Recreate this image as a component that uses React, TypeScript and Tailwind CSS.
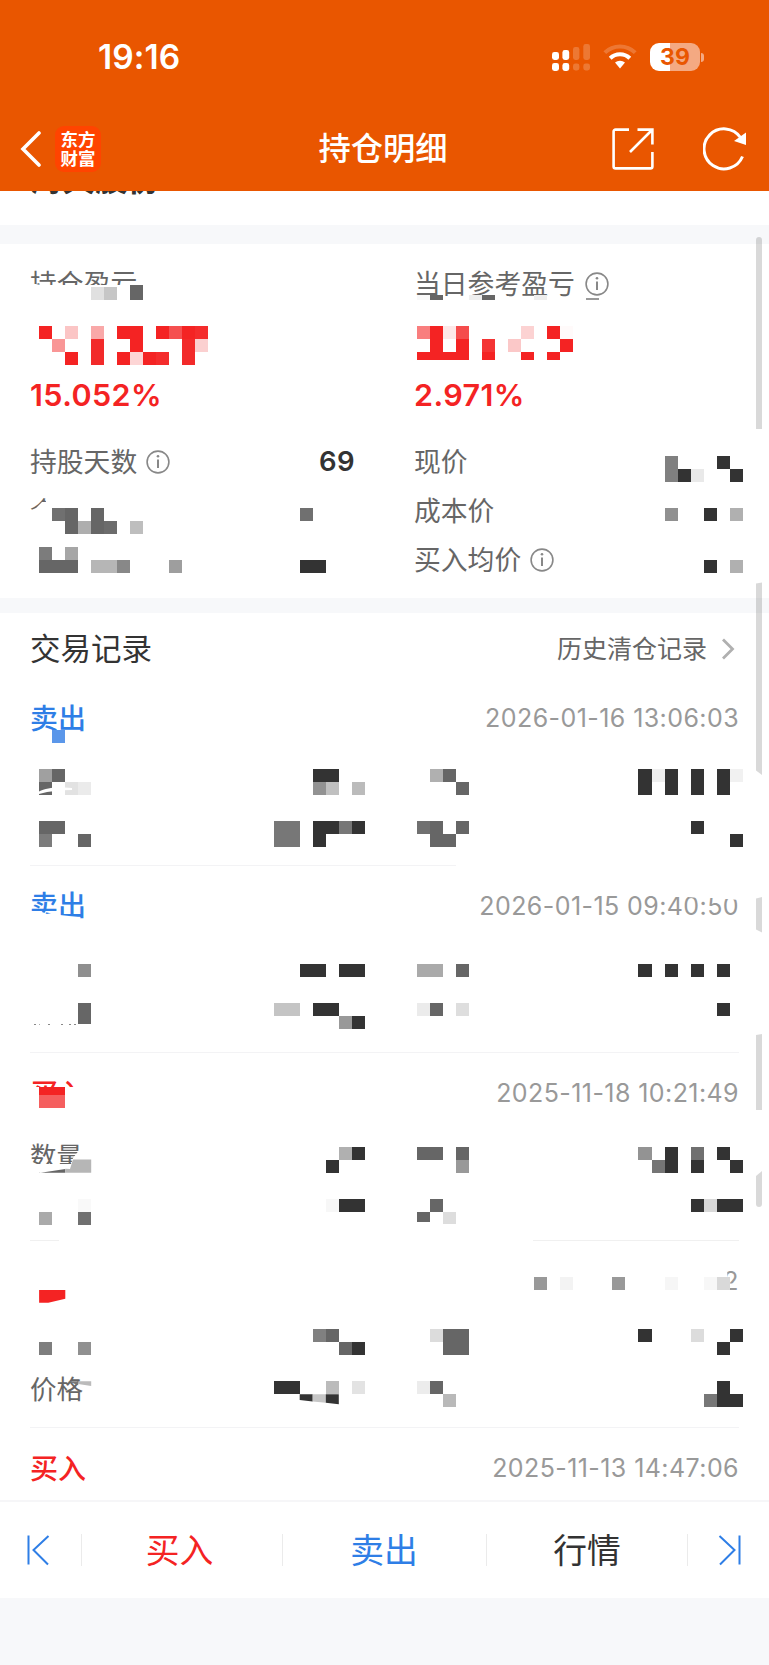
import type { ReactNode } from "react";

const CELL = 13.03;

const RED = "#f42323";
const MID = "#666666";
const DARK = "#333333";

// [column, row, width, height, color], measured in mosaic cells
type Block = [number, number, number, number, string];

const blocks: Block[] = [
  // profit summary
  [7, 22, 1, 1, "#e0e0e0"],
  [8, 22, 1, 1, "#c6c6c6"],
  [10, 21.87, 1, 1.13, MID],
  [3, 25, 1, 1, RED],
  [5, 25, 1, 1, "#fbc5c5"],
  [7, 25, 1, 1, "#f9a8a8"],
  [9, 25, 2, 1, RED],
  [12, 25, 1, 1, RED],
  [13, 25, 1, 1, "#f55050"],
  [14, 25, 1, 1, RED],
  [15, 25, 1, 1, "#f42c2c"],
  [4, 26, 1, 1, "#f99696"],
  [7, 26, 1, 2, "#f22a2a"],
  [10, 26, 1, 1, RED],
  [14, 26, 1, 2, "#f22a2a"],
  [15, 26, 1, 1, "#fbd0d0"],
  [5, 27, 1, 1, RED],
  [9, 27, 1, 1, RED],
  [10, 27, 1, 1, "#fdd5d5"],
  [11, 27, 1, 1, RED],
  [12, 27, 1, 1, "#f42c2c"],
  [32, 22.64, 1, 0.38, "#f8f8f8"],
  [33, 22.64, 1, 0.38, MID],
  [36, 22.64, 1, 0.38, "#efefef"],
  [37, 22.64, 1, 0.38, MID],
  [41, 22.64, 1, 0.38, "#eeeeee"],
  [45, 22.87, 1, 0.14, "#999999"],
  [32, 25, 1, 1, "#f97e7e"],
  [33, 25, 1, 2, RED],
  [34, 25, 1, 1, "#fde8e8"],
  [35, 25, 1, 1, "#f54c4c"],
  [40, 25, 1, 1, "#fcd2d2"],
  [42, 25, 1, 1, RED],
  [43, 25, 1, 1, "#fffafa"],
  [35, 26, 1, 1, RED],
  [37, 26, 1, 1, "#f43434"],
  [39, 26, 1, 1, "#fbc8c8"],
  [43, 26, 1, 1, RED],
  [32, 27, 4, 0.62, RED],
  [37, 27, 1, 0.62, RED],
  [40, 27, 1, 0.62, RED],
  [42, 27, 1, 0.62, RED],
  // position details
  [51, 35, 1, 2, "#808080"],
  [55, 35, 1, 1, DARK],
  [52, 36, 1, 1, DARK],
  [53, 36, 1, 1, "#e9e9e9"],
  [56, 36, 1, 1, DARK],
  [4, 39, 1, 1, "#707070"],
  [5, 39, 1, 2, MID],
  [7, 39, 1, 2, MID],
  [23, 39, 1, 1, "#707070"],
  [6, 40, 1, 1, "#aeaeae"],
  [8, 40, 1, 1, "#6c6c6c"],
  [10, 40, 1, 1, "#bebebe"],
  [51, 39, 1, 1, "#909090"],
  [54, 39, 1, 1, DARK],
  [56, 39, 1, 1, "#b0b0b0"],
  [3, 42, 1, 1, "#7c7c7c"],
  [5, 42, 1, 1, "#a6a6a6"],
  [3, 43, 3, 1, MID],
  [7, 43, 2, 1, "#b6b6b6"],
  [9, 43, 1, 1, "#888888"],
  [13, 43, 1, 1, "#9e9e9e"],
  [23, 43, 2, 1, DARK],
  [54, 43, 1, 1, DARK],
  [56, 43, 1, 1, "#b0b0b0"],
  // record 1
  [4, 56, 1, 1, "#5b97ea"],
  [3, 59, 1, 1, "#a0a0a0"],
  [4, 59, 1, 1, MID],
  [24, 59, 2, 1, DARK],
  [3, 60, 1, 1, MID],
  [5, 60, 1, 1, "#e2e2e2"],
  [6, 60, 1, 1, "#ebebeb"],
  [24, 60, 1, 1, "#929292"],
  [25, 60, 1, 1, "#c0c0c0"],
  [27, 60, 1, 1, "#bbbbbb"],
  [33, 59, 1, 1, "#b0b0b0"],
  [34, 59, 1, 1, MID],
  [35, 60, 1, 1, MID],
  [49, 59, 1, 2, DARK],
  [50, 59, 1, 1, "#efefef"],
  [51, 59, 1, 2, DARK],
  [53, 59, 1, 2, DARK],
  [55, 59, 1, 2, DARK],
  [56, 59, 1, 1, "#f1f1f1"],
  [3, 63, 2, 1, MID],
  [21, 63, 2, 2, "#777777"],
  [24, 63, 2, 1, DARK],
  [26, 63, 1, 1, "#777777"],
  [27, 63, 1, 1, DARK],
  [3, 64, 1, 1, "#7c7c7c"],
  [6, 64, 1, 1, MID],
  [24, 64, 1, 1, DARK],
  [32, 63, 1, 1, "#707070"],
  [33, 63, 1, 2, MID],
  [34, 64, 1, 1, MID],
  [35, 63, 1, 1, MID],
  [53, 63, 1, 1, DARK],
  [56, 64, 1, 1, DARK],
  // record 2
  [6, 74, 1, 1, "#8f8f8f"],
  [23, 74, 2, 1, DARK],
  [26, 74, 2, 1, DARK],
  [32, 74, 2, 1, "#aaaaaa"],
  [35, 74, 1, 1, MID],
  [49, 74, 1, 1, DARK],
  [51, 74, 1, 1, DARK],
  [53, 74, 1, 1, DARK],
  [55, 74, 1, 1, DARK],
  [6, 77, 1, 1.6, MID],
  [21, 77, 2, 1, "#c4c4c4"],
  [24, 77, 2, 1, DARK],
  [26, 78, 1, 1, "#999999"],
  [27, 78, 1, 1, DARK],
  [32, 77, 1, 1, "#ebebeb"],
  [33, 77, 1, 1, MID],
  [35, 77, 1, 1, "#dedede"],
  [55, 77, 1, 1, DARK],
  [2.6, 78.58, 0.16, 0.08, "#888888"],
  [3, 78.58, 0.1, 0.08, "#aaaaaa"],
  [3.7, 78.58, 0.16, 0.08, "#888888"],
  [4.7, 78.58, 0.16, 0.08, "#888888"],
  [5.3, 78.58, 0.12, 0.08, "#888888"],
  [5.7, 78.58, 0.12, 0.08, "#888888"],
  // record 3
  [3, 83.45, 2, 0.6, RED],
  [3, 84, 2, 1, "#f55f5f"],
  [26, 88, 1, 1, "#b0b0b0"],
  [27, 88, 1, 1, DARK],
  [25, 89, 1, 1, DARK],
  [32, 88, 2, 1, MID],
  [35, 88, 1, 1, MID],
  [35, 89, 1, 1, "#999999"],
  [49, 88, 1, 1, "#939393"],
  [50, 89, 1, 1, "#757575"],
  [51, 88, 1, 2, DARK],
  [53, 88, 1, 1, "#707070"],
  [53, 89, 1, 1, DARK],
  [55, 88, 1, 1, DARK],
  [56, 89, 1, 1, DARK],
  [6, 92, 1, 1, "#f9f9f9"],
  [3, 93, 1, 1, "#aaaaaa"],
  [6, 93, 1, 1, "#707070"],
  [25, 92, 1, 1, "#f7f7f7"],
  [26, 92, 2, 1, DARK],
  [33, 92, 1, 1, MID],
  [32, 93, 1, 0.8, MID],
  [34, 93, 1, 0.9, "#dddddd"],
  [53, 92, 1, 1, DARK],
  [54, 92, 1, 1, "#d8d8d8"],
  [55, 92, 2, 1, DARK],
  // record 4
  [41, 98, 1, 1, "#999999"],
  [43, 98, 1, 1, "#f3f3f3"],
  [47, 98, 1, 1, "#999999"],
  [51, 98, 1, 1, "#f6f6f6"],
  [54, 98, 1, 1, "#f7f7f7"],
  [55, 98, 1, 1, "#d9d9d9"],
  [24, 102, 1, 1, "#808080"],
  [25, 102, 1, 1, MID],
  [3, 103, 1, 1, "#7e7e7e"],
  [6, 103, 1, 1, "#909090"],
  [26, 103, 1, 1, MID],
  [27, 103, 1, 1, DARK],
  [33, 102, 1, 1, "#dcdcdc"],
  [34, 102, 2, 2, MID],
  [49, 102, 1, 1, DARK],
  [53, 102, 1, 1, "#dcdcdc"],
  [56, 102, 1, 1, DARK],
  [55, 103, 1, 1, DARK],
  [21, 106, 2, 1, DARK],
  [25, 106, 1, 1, "#bbbbbb"],
  [27, 106, 1, 1, "#e3e3e3"],
  [32, 106, 1, 1, "#ececec"],
  [33, 106, 1, 1, MID],
  [34, 107, 1, 1, "#b9b9b9"],
  [55, 106, 1, 1, DARK],
  [54, 107, 1, 1, "#777777"],
  [55, 107, 2, 1, DARK],
];

// Brush strokes that wipe out parts of the labels
const wipes = [
  "29,284 36,284 40,285 142,285 142,304 29,304",
  "46,487 60,487 60,528 29,528 29,511 36,508 42,502 46,502",
  "29,912 42,912 47,914 56,912 60,915 78,917 78,920 90,930 29,930",
  "674,892 740,892 740,900 726,899 712,898 700,898 688,897 674,897",
  "30,1087 90,1087 90,1112 30,1112",
  "29,1164 71,1164 73,1158 80,1149 90,1149 90,1180 29,1180",
  "704,1267 727,1267 728,1290 704,1290",
  "726,1283.5 740,1283.5 740,1286.5 726,1286.5",
];

// Leftover pieces that are not whole cells
const shards = [
  { points: "39.1,1173 65.3,1169 65.3,1172.7 39.1,1172.7", fill: MID },
  { points: "65.3,1168.8 70,1169 73,1159.5 91.2,1159.5 91.2,1172.7 65.3,1172.7", fill: "#b6b6b6" },
  { points: "39.1,1290 65.3,1290 65.3,1298.7 48.3,1302.8 39.1,1302.8", fill: RED },
  { points: "68,1381.2 78.2,1381.2 78.2,1385.3", fill: "#777777" },
  { points: "78.2,1381.2 91.2,1381.2 91.2,1386 78.2,1384", fill: "#bbbbbb" },
  { points: "299.7,1394.2 312.7,1394.2 312.7,1401.5 299.7,1400", fill: DARK },
  { points: "312.7,1394.2 325.8,1394.2 325.8,1402.7 312.7,1401.5", fill: "#c6c6c6" },
  { points: "325.8,1394.2 338.8,1394.2 338.8,1404.3 325.8,1402.7", fill: DARK },
];

const scrollbar = [
  "M756 429V240a3 3 0 0 1 6 0V429Z",
  "M756 583.5L762 582.5V775L756 770.5Z",
  "M756 898.5L762 897V932.5L756 929.5Z",
  "M756 1035L762 1034V1110H756Z",
  "M756 1176L762 1171V1204a3 3 0 0 1-6 0Z",
];

function Mosaic() {
  return (
    <svg className="pointer-events-none absolute left-0 top-0" width="769" height="1665" viewBox="0 0 769 1665">
      {wipes.map((points) => (
        <polygon key={points} points={points} fill="#fff" />
      ))}
      <g shapeRendering="crispEdges">
        {blocks.map(([x, y, w, h, fill], index) => (
          <rect key={index} x={x * CELL} y={y * CELL} width={w * CELL} height={h * CELL} fill={fill} />
        ))}
      </g>
      {shards.map((shard) => (
        <polygon key={shard.points} points={shard.points} fill={shard.fill} />
      ))}
      <path d="M38 792C45 788 52 788 58 787L72 788V790C60 790 50 791 39 794Z" fill="#fff" />
      {scrollbar.map((d) => (
        <path key={d} d={d} fill="#000" fillOpacity="0.15" />
      ))}
    </svg>
  );
}

function InfoIcon() {
  return (
    <svg width="24" height="24" viewBox="0 0 24 24" fill="none" stroke="#888" className="shrink-0">
      <circle cx="12" cy="12" r="10.9" strokeWidth="1.6" />
      <path d="M12 9.6V18" strokeWidth="2" />
      <circle cx="12" cy="6.3" r="1.3" fill="#888" stroke="none" />
    </svg>
  );
}

function StatusBar() {
  return (
    <div className="flex h-[106px] items-center pl-[98px] pr-[64px] pt-[8px]">
      <span className="pt-[2px] text-[33.5px] font-semibold leading-none tracking-[0.1px]">19:16</span>
      <svg className="ml-auto" width="39" height="28" viewBox="0 0 39 28" fill="#fff">
        <rect x="0" y="9" width="7" height="8" rx="2.4" />
        <rect x="0" y="20" width="7" height="8" rx="2.4" />
        <rect x="10.4" y="7" width="6.8" height="10" rx="2.4" />
        <rect x="10.4" y="20" width="6.8" height="8" rx="2.4" />
        <g opacity="0.2">
          <rect x="21" y="4" width="6.4" height="13" rx="2.4" />
          <rect x="21" y="20.5" width="6.4" height="7" rx="2.4" />
          <rect x="31.3" y="1" width="6.7" height="16" rx="2.4" />
          <rect x="31.3" y="20.5" width="6.7" height="7" rx="2.4" />
        </g>
      </svg>
      <svg className="ml-[12px]" width="34" height="26" viewBox="0 0 34 26" fill="none" stroke="#fff">
        <path d="M1.8 8.6A21.8 21.8 0 0 1 32.2 8.6" strokeWidth="4" opacity="0.2" />
        <path d="M7.2 14.2A14 14 0 0 1 26.8 14.2" strokeWidth="4" />
        <path d="M12 18.6A7.4 7.4 0 0 1 22 18.6L17 24.4Z" fill="#fff" stroke="none" />
      </svg>
      <div className="ml-[13px] flex h-[28px] w-[50px] items-center justify-center rounded-[9px] bg-[linear-gradient(90deg,#fff_40%,#f4a982_40%)]">
        <span className="text-[23px] font-bold leading-none text-[#e95600]">39</span>
      </div>
      <div className="ml-[1px] mr-[1px] h-[9px] w-[3px] rounded-r-full bg-[#f4a982]" />
    </div>
  );
}

function NavBar() {
  return (
    <div className="flex h-[85px] items-center pl-[19px] pr-[22px]">
      <svg width="22" height="36" viewBox="0 0 22 36" fill="none" stroke="#fff" strokeWidth="3.6">
        <path d="M20 2L4 18L20 34" strokeLinecap="round" />
      </svg>
      <div className="ml-[14px] h-[46px] w-[46px] rounded-[9px] bg-[#ff4400] pt-[4px] text-center text-[17.5px] font-bold leading-[19px]">
        东方
        <br />
        财富
      </div>
      <h1 className="flex-1 pl-[53px] pt-[2px] text-center text-[32.3px] font-medium leading-none">持仓明细</h1>
      <svg width="42" height="42" viewBox="0 0 42 42" fill="none" stroke="#fff" strokeWidth="2.6">
        <path d="M17 1.6H3.6a2 2 0 0 0-2 2V38.4a2 2 0 0 0 2 2H38.4a2 2 0 0 0 2-2V24" />
        <path d="M25.5 1.6H40.4V16.5M40 2L18 24" />
      </svg>
      <svg className="ml-[49px]" width="44" height="44" viewBox="0 0 44 44">
        <path d="M39.5 29.5A20 20 0 1 1 37.5 10.5" fill="none" stroke="#fff" strokeWidth="3" />
        <path d="M43 5.5V18L31 14Z" fill="#fff" />
      </svg>
    </div>
  );
}

function Field({ label, value, info }: { label: ReactNode; value?: string; info?: boolean }) {
  return (
    <div className="flex h-[49px] items-center text-[26.8px]">
      <span className="pt-[2px] leading-none text-[#666]">{label}</span>
      {info && (
        <span className="ml-[9px]">
          <InfoIcon />
        </span>
      )}
      {value && (
        <span className="ml-auto pt-[1px] text-[27.5px] font-semibold leading-none tracking-[0.4px] text-[#333]">
          {value}
        </span>
      )}
    </div>
  );
}

interface TradeRecord {
  side: "买入" | "卖出" | "";
  time: string;
  quantity?: string;
  price?: string;
  line: string;
}

const records: TradeRecord[] = [
  { side: "卖出", time: "2026-01-16 13:06:03", line: "w-[426px]" },
  { side: "卖出", time: "2026-01-15 09:40:50", line: "w-full" },
  { side: "买入", time: "2025-11-18 10:21:49", quantity: "数量", line: "w-full" },
  { side: "", time: "2", price: "价格", line: "w-full" },
];

function RecordHeader({ side, time }: { side: string; time: string }) {
  const color = side === "卖出" ? "text-[#2e7ee6]" : "text-[#f42323]";
  return (
    <div className="flex h-[79px] items-center justify-between pt-[2px]">
      <span className={`text-[28px] font-medium leading-none ${color}`}>{side}</span>
      <span className="text-[25px] leading-none tracking-[0.42px] text-[#999]">{time}</span>
    </div>
  );
}

function Record({ record }: { record: TradeRecord }) {
  return (
    <div className="flex h-[187.6px] flex-col">
      <RecordHeader side={record.side} time={record.time} />
      <div className="flex h-[45.5px] items-center pt-[2px] text-[26.5px] leading-none text-[#666]">
        {record.quantity}
      </div>
      <div className="flex h-[45.5px] items-center pt-[2px] text-[26.5px] leading-none text-[#666]">{record.price}</div>
      {record.quantity ? (
        <div className="mt-auto flex justify-between">
          <div className="h-px w-[29px] bg-[#f0f0f0]" />
          <div className="h-px w-[206px] bg-[#f0f0f0]" />
        </div>
      ) : (
        <div className={`mt-auto h-px bg-[#f3f3f5] ${record.line}`} />
      )}
    </div>
  );
}

function TabBar() {
  return (
    <nav className="flex h-[98px] items-center border-t-2 border-[#f6f6f8] bg-white text-[33.8px] leading-none">
      <div className="flex w-[81px] justify-center pr-[5px]">
        <svg width="24" height="32" viewBox="0 0 24 32" fill="none" stroke="#2e7ee6" strokeWidth="2">
          <path d="M2.5 1.5V30.5M22.5 2L7.5 16L22 30.5" />
        </svg>
      </div>
      <div className="h-[32px] w-px bg-[#ebebeb]" />
      <div className="w-[200px] pr-[5px] pt-[2px] text-center text-[#f42323]">买入</div>
      <div className="h-[32px] w-px bg-[#ebebeb]" />
      <div className="w-[203px] pr-[1px] pt-[2px] text-center text-[#2e7ee6]">卖出</div>
      <div className="h-[32px] w-px bg-[#ebebeb]" />
      <div className="w-[200px] pt-[2px] text-center text-[#333]">行情</div>
      <div className="h-[32px] w-px bg-[#ebebeb]" />
      <div className="flex flex-1 justify-center pl-[2px]">
        <svg width="24" height="32" viewBox="0 0 24 32" fill="none" stroke="#2e7ee6" strokeWidth="2">
          <path d="M21.5 1.5V30.5M1.5 2L16.5 16L2 30.5" />
        </svg>
      </div>
    </nav>
  );
}

export default function App() {
  return (
    <div className="relative flex h-[1665px] w-[769px] flex-col overflow-hidden bg-[#f7f8fa] font-['Inter','Noto_Sans_CJK_SC',sans-serif]">
      <header className="h-[191px] shrink-0 bg-[#e95600] text-white">
        <StatusBar />
        <NavBar />
      </header>

      {/* Stock name, scrolled under the header */}
      <div className="flex h-[34px] shrink-0 flex-col justify-start overflow-hidden bg-white pl-[30px]">
        <span className="-mt-[27px] text-[32.5px] font-bold leading-[32px] text-[#333]">海天股份</span>
      </div>

      <section className="mt-[19px] grid h-[354px] shrink-0 grid-cols-2 gap-x-[59px] bg-white px-[30px]">
        <div>
          <div className="flex h-[79px] items-center pt-[2px] text-[26.8px] leading-none text-[#666]">持仓盈亏</div>
          <div className="mt-[48px] flex h-[48px] items-center text-[30.5px] font-semibold leading-none tracking-[0.4px] text-[#f42323]">
            15.052%
          </div>
          <div className="mt-[18px]">
            <Field label="持股天数" value="69" info />
            <Field label="个" />
          </div>
        </div>
        <div>
          <div className="flex h-[79px] items-center text-[26.8px] leading-none text-[#666]">
            <span className="pt-[2px]">当日参考盈亏</span>
            <span className="ml-[10px]">
              <InfoIcon />
            </span>
          </div>
          <div className="mt-[48px] flex h-[48px] items-center text-[30.5px] font-semibold leading-none tracking-[0.4px] text-[#f42323]">
            2.971%
          </div>
          <div className="mt-[18px]">
            <Field label="现价" />
            <Field label="成本价" />
            <Field label="买入均价" info />
          </div>
        </div>
      </section>

      <section className="mt-[15px] h-[887px] shrink-0 overflow-hidden bg-white px-[30px]">
        <div className="flex h-[65px] items-center pt-[7px]">
          <h2 className="text-[30.5px] leading-none text-[#333]">交易记录</h2>
          <span className="ml-auto pt-[1px] text-[25px] leading-none text-[#666]">历史清仓记录</span>
          <svg className="ml-[14px] mr-[4px]" width="14" height="22" viewBox="0 0 14 22" fill="none" stroke="#b0b0b0">
            <path d="M2 1.5L11.5 11L2 20.5" strokeWidth="2.8" />
          </svg>
        </div>
        {records.map((record) => (
          <Record key={record.time} record={record} />
        ))}
        <RecordHeader side="买入" time="2025-11-13 14:47:06" />
      </section>

      <TabBar />
      <Mosaic />
    </div>
  );
}
